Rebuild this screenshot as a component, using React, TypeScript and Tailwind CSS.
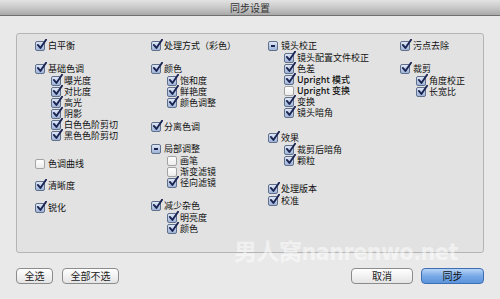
import React from "react";

type State = "on" | "off" | "mixed";
type Item = { label: string; state: State; mt: string; children?: { label: string; state: State }[] };

const FONT = { fontFamily: '"Noto Sans CJK SC", "Liberation Sans", sans-serif' };

const COLUMNS: Item[][] = [
  [
    { label: "白平衡", state: "on", mt: "mt-0" },
    {
      label: "基础色调",
      state: "on",
      mt: "mt-[12px]",
      children: [
        { label: "曝光度", state: "on" },
        { label: "对比度", state: "on" },
        { label: "高光", state: "on" },
        { label: "阴影", state: "on" },
        { label: "白色色阶剪切", state: "on" },
        { label: "黑色色阶剪切", state: "on" },
      ],
    },
    { label: "色调曲线", state: "off", mt: "mt-[17px]" },
    { label: "清晰度", state: "on", mt: "mt-[11px]" },
    { label: "锐化", state: "on", mt: "mt-[11px]" },
  ],
  [
    { label: "处理方式（彩色）", state: "on", mt: "mt-0" },
    {
      label: "颜色",
      state: "on",
      mt: "mt-[12px]",
      children: [
        { label: "饱和度", state: "on" },
        { label: "鲜艳度", state: "on" },
        { label: "颜色调整", state: "on" },
      ],
    },
    { label: "分离色调", state: "on", mt: "mt-[13px]" },
    {
      label: "局部调整",
      state: "mixed",
      mt: "mt-[11px]",
      children: [
        { label: "画笔", state: "off" },
        { label: "渐变滤镜", state: "off" },
        { label: "径向滤镜", state: "on" },
      ],
    },
    {
      label: "减少杂色",
      state: "on",
      mt: "mt-[12px]",
      children: [
        { label: "明亮度", state: "on" },
        { label: "颜色", state: "on" },
      ],
    },
  ],
  [
    {
      label: "镜头校正",
      state: "mixed",
      mt: "mt-0",
      children: [
        { label: "镜头配置文件校正", state: "on" },
        { label: "色差", state: "on" },
        { label: "Upright 模式", state: "on" },
        { label: "Upright 变换", state: "off" },
        { label: "变换", state: "on" },
        { label: "镜头暗角", state: "on" },
      ],
    },
    {
      label: "效果",
      state: "on",
      mt: "mt-[14px]",
      children: [
        { label: "裁剪后暗角", state: "on" },
        { label: "颗粒", state: "on" },
      ],
    },
    { label: "处理版本", state: "on", mt: "mt-[17px]" },
    { label: "校准", state: "on", mt: "mt-[1px]" },
  ],
  [
    { label: "污点去除", state: "on", mt: "mt-0" },
    {
      label: "裁剪",
      state: "on",
      mt: "mt-[12px]",
      children: [
        { label: "角度校正", state: "on" },
        { label: "长宽比", state: "on" },
      ],
    },
  ],
];

function Box({ state }: { state: State }) {
  if (state === "off") {
    return (
      <span className="relative inline-block w-[10px] h-[10px] shrink-0 rounded-[2px] border border-[#a3a3a3] bg-gradient-to-b from-[#ffffff] to-[#ececec]" />
    );
  }
  return (
    <span className="relative inline-block w-[10px] h-[10px] shrink-0 rounded-[2px] border border-[#5f6f8c] bg-gradient-to-b from-[#dfe7f5] to-[#9fb4d8]">
      {state === "on" && (
        <svg className="absolute -top-[3px] left-[0px] w-[11px] h-[11px]" viewBox="0 0 12 12">
          <path d="M2 6.5 L4.8 9.8 L11 0.8" stroke="#1b2553" strokeWidth="2.1" fill="none" strokeLinecap="round" strokeLinejoin="round" />
        </svg>
      )}
      {state === "mixed" && <span className="absolute left-[2px] right-[2px] top-[3px] h-[2px] bg-[#1b2553]" />}
    </span>
  );
}

function Row({ label, state }: { label: string; state: State }) {
  return (
    <div className="flex items-center h-[11px] gap-[3px]">
      <Box state={state} />
      <span className={`text-[9px] leading-none text-[#111] whitespace-nowrap ${label.startsWith("Upright") ? "font-medium" : ""}`}>
        {label}
      </span>
    </div>
  );
}

export default function App() {
  return (
    <div className="w-[500px] h-[299px] bg-[#e9e9e9] flex flex-col relative overflow-hidden" style={FONT}>
      {/* Title bar */}
      <div className="h-[16px] shrink-0 bg-gradient-to-b from-[#e3e3e3] via-[#c9c9c9] to-[#a9a9a9] border-b border-[#6f6f6f] flex items-center justify-center">
        <span className="text-[10px] leading-none text-[#333]">同步设置</span>
      </div>

      <div className="px-[16px] pt-[17px]">
        {/* Panel */}
        <div className="h-[220px] rounded-[3px] border border-[#b5b5b5] bg-[#e2e2e2] pl-[18px] pt-[6px] grid grid-cols-[116px_117px_132px_1fr]">
          {COLUMNS.map((col, ci) => (
            <div key={`col-${ci}`} className="flex flex-col">
              {col.map((item, ii) => (
                <div key={`item-${ci}-${ii}`} className={item.mt}>
                  <Row label={item.label} state={item.state} />
                  {item.children && (
                    <div className="pl-[16px] mt-[1px]">
                      {item.children.map((c, k) => (
                        <Row key={`c-${k}`} label={c.label} state={c.state} />
                      ))}
                    </div>
                  )}
                </div>
              ))}
            </div>
          ))}
        </div>

        {/* Buttons */}
        <div className="flex items-center mt-[15px]">
          <button className="w-[37px] h-[16px] rounded-[4px] border border-[#8c8c8c] bg-gradient-to-b from-[#ffffff] to-[#e4e4e4] text-[10px] leading-none text-[#222]">
            全选
          </button>
          <button className="ml-[9px] w-[57px] h-[16px] rounded-[4px] border border-[#8c8c8c] bg-gradient-to-b from-[#ffffff] to-[#e4e4e4] text-[10px] leading-none text-[#222]">
            全部不选
          </button>
          <div className="flex-1" />
          <button className="w-[62px] h-[16px] rounded-[4px] border border-[#8c8c8c] bg-gradient-to-b from-[#ffffff] to-[#e4e4e4] text-[10px] leading-none text-[#222]">
            取消
          </button>
          <button className="ml-[8px] w-[63px] h-[16px] rounded-[4px] border border-[#3f6fb3] bg-gradient-to-b from-[#b7d4f6] via-[#78a9e6] to-[#5b93dc] text-[10px] leading-none text-[#111]">
            同步
          </button>
        </div>
      </div>

      {/* Watermark */}
      <div
        className="absolute left-[234px] top-[241px] text-[23px] leading-none font-bold tracking-[-0.5px] text-white/50 whitespace-nowrap pointer-events-none select-none"
        style={{ fontFamily: '"DejaVu Sans Condensed", "Noto Sans CJK SC", sans-serif' }}
      >
        男人窝nanrenwo.net
      </div>
    </div>
  );
}
